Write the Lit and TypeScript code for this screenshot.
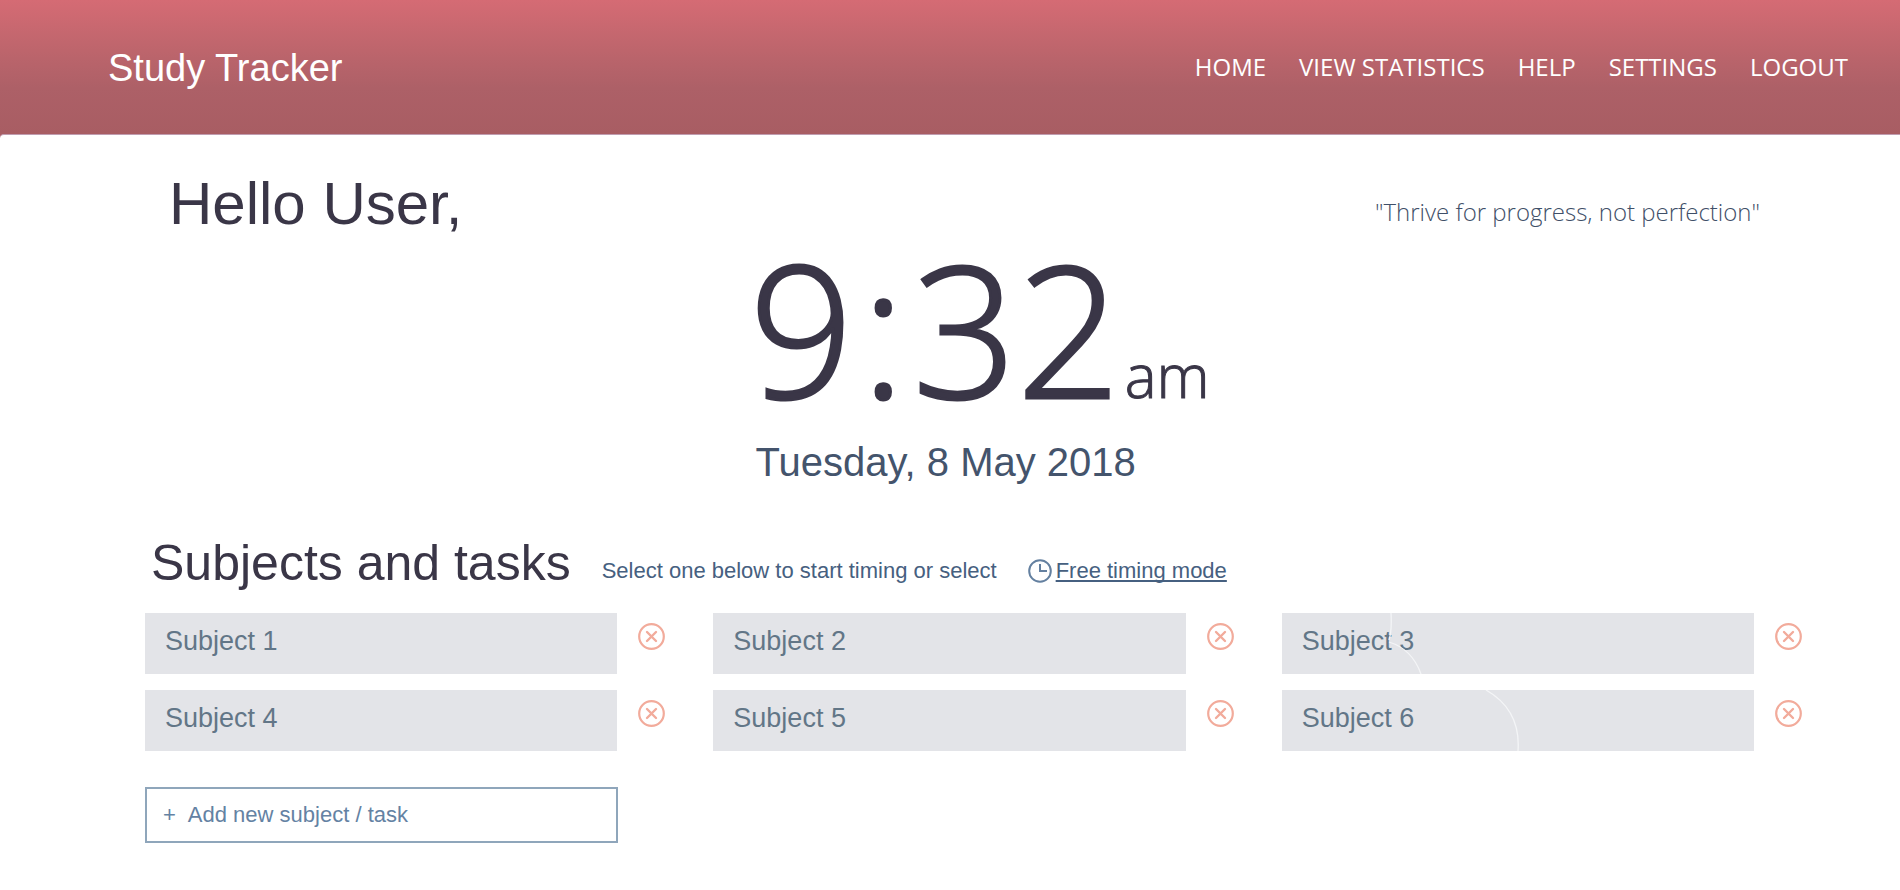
import { LitElement, html, css, svg, nothing } from "lit";
import { customElement, property, state } from "lit/decorators.js";

interface Subject {
  id: number;
  name: string;
  trace?: string;
}

@customElement("subject-card")
class SubjectCard extends LitElement {
  @property() name = "";
  @property() trace = "";

  static styles = css`
    :host {
      display: flex;
      align-items: flex-start;
      gap: 21px;
    }
    button {
      font: inherit;
      border: 0;
      margin: 0;
      cursor: pointer;
    }
    .card {
      position: relative;
      flex: 1;
      min-width: 0;
      padding: 12px 20px 17px;
      background: #e3e4e8;
      color: #627687;
      font-size: 27px;
      line-height: 32px;
      text-align: left;
    }
    .trace {
      position: absolute;
      top: 0;
      left: 0;
      fill: none;
      stroke: #f4f5f7;
      stroke-width: 1.3;
    }
    .remove {
      flex: none;
      margin-top: 10px;
      padding: 0;
      background: none;
      color: #f2ab9b;
    }
    .icon {
      display: block;
      fill: none;
      stroke: currentColor;
      stroke-width: 2.2;
      stroke-linecap: round;
    }
    .cross {
      stroke-width: 2.4;
    }
  `;

  render() {
    return html`
      <button class="card" type="button">
        ${this.name}
        ${this.trace
          ? html`<svg class="trace" width="240" height="61" aria-hidden="true">
              ${svg`<path d=${this.trace} />`}
            </svg>`
          : nothing}
      </button>
      <button
        class="remove"
        type="button"
        aria-label="Remove ${this.name}"
        @click=${() => this.dispatchEvent(new CustomEvent("remove"))}
      >
        <svg class="icon" width="27" height="27" viewBox="0 0 27 27" aria-hidden="true">
          <circle cx="13.5" cy="13.5" r="12.3" />
          <path class="cross" d="M9 9l9 9M18 9l-9 9" />
        </svg>
      </button>
    `;
  }
}

@customElement("app-root")
class AppRoot extends LitElement {
  @state() private subjects: Subject[] = [
    { id: 1, name: "Subject 1" },
    { id: 2, name: "Subject 2" },
    { id: 3, name: "Subject 3", trace: "M109 0Q110 18 107 27M107 29Q130 36 139 61" },
    { id: 4, name: "Subject 4" },
    { id: 5, name: "Subject 5" },
    { id: 6, name: "Subject 6", trace: "M204 0Q239 20 236 61" },
  ];

  static styles = css`
    :host {
      display: block;
      min-height: 100vh;
      background: #fff;
      font-family: "Liberation Sans", Arial, sans-serif;
      color: #3a3647;
    }
    h1,
    h2,
    p {
      margin: 0;
      font-weight: 400;
    }
    .top {
      display: flex;
      align-items: center;
      justify-content: space-between;
      height: 134px;
      padding: 0 52px 0 108px;
      background: linear-gradient(#d56b74, #bd656c 38%, #ad6067 66%, #a85d63);
      color: #fff;
    }
    .brand {
      padding-top: 3px;
      font-size: 38px;
      color: inherit;
      text-decoration: none;
    }
    .nav {
      display: flex;
      gap: 33px;
      padding-bottom: 2px;
      font-family: "Open Sans", "Noto Sans", sans-serif;
      font-size: 24px;
    }
    .nav a {
      color: inherit;
      text-decoration: none;
    }
    .sheet {
      background: #a85d63;
    }
    main {
      padding: 37px 98px 32px 145px;
      border-top: 1px solid #c09db0;
      border-top-left-radius: 4px;
      background: #fff;
    }
    .welcome {
      display: flex;
      justify-content: space-between;
      align-items: center;
      padding: 0 42px 0 24px;
    }
    .hello {
      font-size: 60px;
      line-height: 64px;
    }
    .quote {
      padding-top: 16px;
      font-family: "Open Sans", "Noto Sans", sans-serif;
      font-weight: 300;
      font-size: 24px;
      line-height: 32px;
      color: #3f4f68;
    }
    .clock {
      width: fit-content;
      margin: 11px auto 0;
      padding-left: 12px;
    }
    .time {
      display: flex;
      align-items: baseline;
      gap: 4px;
      font-family: "Open Sans", "Noto Sans", sans-serif;
      font-weight: 300;
      font-size: 182px;
      line-height: 160px;
    }
    .digits {
      -webkit-text-stroke: 3px currentColor;
    }
    .colon {
      padding: 0 8px;
    }
    .meridiem {
      font-size: 60px;
      line-height: 64px;
      -webkit-text-stroke: 1px currentColor;
    }
    .date {
      margin-top: 31px;
      padding-left: 6px;
      font-size: 40px;
      line-height: 48px;
      color: #44546c;
    }
    .heading {
      display: flex;
      align-items: center;
      gap: 31px;
      margin-top: 49px;
      padding-left: 6px;
      font-size: 22px;
      color: #466080;
    }
    .heading h2 {
      font-size: 50px;
      line-height: 56px;
      color: #3a3647;
    }
    .hint {
      display: flex;
      align-items: center;
      gap: 31px;
      padding-top: 16px;
    }
    .free {
      display: flex;
      align-items: center;
      gap: 4px;
      color: inherit;
      text-decoration: none;
    }
    .free span {
      text-decoration: underline;
      text-decoration-thickness: 2px;
      text-underline-offset: 2px;
      text-decoration-skip-ink: none;
    }
    .clock-icon {
      fill: none;
      stroke: #6480a0;
      stroke-width: 2;
    }
    .grid {
      display: grid;
      grid-template-columns: repeat(3, minmax(0, 1fr));
      gap: 16px 48px;
      margin-top: 22px;
    }
    .actions {
      display: grid;
      grid-template-columns: repeat(3, minmax(0, 1fr));
      gap: 48px;
      margin-top: 36px;
    }
    .add {
      display: flex;
      align-items: center;
      gap: 12px;
      height: 56px;
      margin: 0 47px 0 0;
      padding: 0 16px;
      border: 2px solid #8fa6bb;
      background: #fff;
      color: #6482a3;
      font: inherit;
      font-size: 22px;
      cursor: pointer;
    }
  `;

  private remove(id: number) {
    this.subjects = this.subjects.filter((s) => s.id !== id);
  }

  private add() {
    const id = Math.max(0, ...this.subjects.map((s) => s.id)) + 1;
    this.subjects = [...this.subjects, { id, name: `Subject ${id}` }];
  }

  render() {
    return html`
      <header class="top">
        <a class="brand" href="#">Study Tracker</a>
        <nav class="nav">
          ${["HOME", "VIEW STATISTICS", "HELP", "SETTINGS", "LOGOUT"].map(
            (label) => html`<a href="#">${label}</a>`
          )}
        </nav>
      </header>
      <div class="sheet">
        <main>
          <div class="welcome">
            <h1 class="hello">Hello User,</h1>
            <p class="quote">"Thrive for progress, not perfection"</p>
          </div>
          <div class="clock">
            <div class="time">
              <span class="digits">9<span class="colon">:</span>32</span><span class="meridiem">am</span>
            </div>
            <p class="date">Tuesday, 8 May 2018</p>
          </div>
          <div class="heading">
            <h2>Subjects and tasks</h2>
            <div class="hint">
              <p>Select one below to start timing or select</p>
              <a class="free" href="#">
                <svg class="clock-icon" width="24" height="24" viewBox="0 0 24 24" aria-hidden="true">
                  <circle cx="12" cy="12" r="10.8" />
                  <path d="M12 5v7h7" />
                </svg>
                <span>Free timing mode</span>
              </a>
            </div>
          </div>
          <div class="grid">
            ${this.subjects.map(
              (s) => html`<subject-card
                .name=${s.name}
                .trace=${s.trace ?? ""}
                @remove=${() => this.remove(s.id)}
              ></subject-card>`
            )}
          </div>
          <div class="actions">
            <button class="add" type="button" @click=${this.add}>
              <span>+</span><span>Add new subject / task</span>
            </button>
          </div>
        </main>
      </div>
    `;
  }
}
